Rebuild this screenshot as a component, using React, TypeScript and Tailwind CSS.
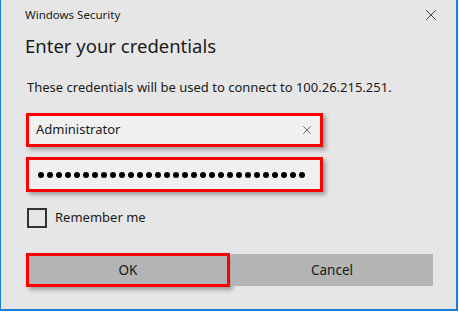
import { X } from "lucide-react";

const font = { fontFamily: '"Noto Sans", "Open Sans", sans-serif' };

export default function App() {
  const dots = Array.from({ length: 30 });
  return (
    <div className="h-[312px] w-[459px] bg-white" style={font}>
      <div className="flex h-[311px] w-[458px] flex-col border-b-2 border-l border-r-2 border-[#1a7fd4] bg-[#e6e6e6] text-[#1a1a1a]">
        {/* title bar */}
        <div className="flex h-[30px] items-center justify-between pl-[24px] pr-[16px]">
          <span className="text-[11.5px]">Windows Security</span>
          <X className="h-[18px] w-[18px] text-[#222]" strokeWidth={1.1} />
        </div>

        <h1 className="mt-[4px] pl-[24px] text-[18.5px] leading-[24px]">Enter your credentials</h1>

        <p className="mt-[21px] pl-[26px] text-[13px] leading-[16px]">
          These credentials will be used to connect to 100.26.215.251.
        </p>

        {/* username */}
        <div className="ml-[25px] mt-[18px] flex h-[34px] w-[297px] items-center justify-between border-[3px] border-[#ff0000] bg-[#f0f0f0] pl-[7px] pr-[6px] shadow-[3px_3px_4px_rgba(0,0,0,0.3)]">
          <span className="text-[13px]">Administrator</span>
          <X className="h-[14px] w-[14px] text-[#333]" strokeWidth={1.2} />
        </div>

        {/* password */}
        <div className="ml-[25px] mt-[10px] flex h-[35px] w-[297px] items-center gap-[3px] border-[3px] border-[#ff0000] bg-[#f0f0f0] pl-[9px] shadow-[3px_3px_4px_rgba(0,0,0,0.3)]">
          {dots.map((_, i) => (
            <span key={i} className="h-[6px] w-[6px] rounded-full bg-black" />
          ))}
        </div>

        {/* remember */}
        <div className="ml-[26px] mt-[16px] flex h-[20px] items-center gap-[8px]">
          <span className="h-[20px] w-[20px] border-2 border-[#333]" />
          <span className="text-[13px]">Remember me</span>
        </div>

        {/* buttons */}
        <div className="ml-[25px] mt-[25px] flex items-center">
          <button className="flex h-[34px] w-[204px] items-center justify-center border-[3px] border-[#ff0000] bg-[#b4b4b4] text-[13.5px] shadow-[3px_3px_4px_rgba(0,0,0,0.3)]">
            OK
          </button>
          <button className="ml-[1px] flex h-[32px] w-[202px] items-center justify-center bg-[#b4b4b4] text-[13.5px]">
            Cancel
          </button>
        </div>
      </div>
    </div>
  );
}
